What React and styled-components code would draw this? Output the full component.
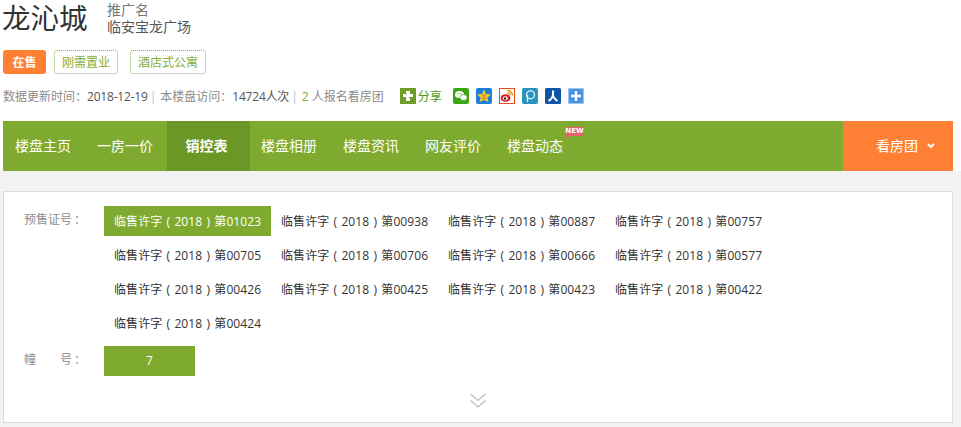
import React from "react";
import styled, { createGlobalStyle } from "styled-components";

const GlobalStyle = createGlobalStyle`
  html, body { margin: 0; padding: 0; background: #f2f2f2; }
  body { font-family: "Open Sans", "Noto Sans CJK SC", sans-serif; font-size: 12px; color: #333; }
`;
const Page = styled.div`width: 961px; height: 427px; overflow: hidden;`;
const Top = styled.header`background: #fff; height: 171px; padding-left: 3px; box-sizing: border-box; display: flex; flex-direction: column;`;
const TitleRow = styled.div`display: flex; height: 50px; align-items: flex-start;`;
const Title = styled.h1`margin: 0 0 0 -1px; width: 105px; font-size: 28.5px; font-weight: 400; line-height: 36px; color: #333;`;
const Promo = styled.div`font-size: 14px; line-height: 17px; padding-top: 1px; color: #777; white-space: nowrap;`;
const PromoName = styled.div`color: #555; line-height: 18px;`;
const Tags = styled.div`display: flex; height: 24px; align-items: stretch;`;
const Status = styled.span`width: 43px; background: #ff7f35; color: #fff; font-weight: 700; border-radius: 3px; display: flex; align-items: center; justify-content: center; margin-right: 8px;`;
const Tag = styled.span`border: 1px dotted #8fb648; border-radius: 3px; color: #86ae35; padding: 0 7px; display: flex; align-items: center; margin-right: 12px; white-space: nowrap;`;
const Info = styled.div`height: 20px; margin-top: 12px; display: flex; align-items: center; color: #8c8c8c; white-space: pre;`;
const Val = styled.span`color: #555; letter-spacing: -0.2px;`;
const Pipe = styled.span`color: #a8c4e0; margin: 0 4px 0 2px;`;
const Green = styled.span`color: #7eab2f;`;
const ShareBox = styled.span`display: flex; align-items: center; margin-left: 16px; color: #4f9a18; margin-right: 11px; gap: 2px;`;
const IconRow = styled.span`display: flex; gap: 7px;`;
const Nav = styled.nav`margin-top: 15px; width: 950px; height: 50px; background: #7eab2f; display: flex; align-items: stretch; color: #fff;`;
const Tab = styled.a`
  position: relative; display: flex; align-items: center; white-space: nowrap; font-size: 14px;
  padding: 0 13px 2px;
  ${p => p.$active ? "background:#6b9727;font-weight:700;margin:0 -2px 0 1px;padding:0 22.5px 2px 18.5px;" : ""}
  ${p => p.$first ? "padding-left:12px;" : ""}
`;
const Badge = styled.span`
  position: absolute; left: 71px; top: 6px; background: #e9626b; color: #fff; font: 700 7px/9px "DejaVu Sans", sans-serif;
  width: 19px; height: 9px; text-align: center;
  &::after { content: ""; position: absolute; left: 1px; top: 9px; border-left: 3px solid #e9626b; border-bottom: 3px solid transparent; }
`;
const Team = styled.a`margin-left: auto; width: 110px; background: #ff7f35; box-sizing: border-box; padding: 0 0 2px 33px; display: flex; align-items: center; font-size: 14px; gap: 9px;`;
const Main = styled.main`padding: 20px 8px 0 3px;`;
const Panel = styled.section`height: 232px; box-sizing: border-box; border: 1px solid #ddd; background: #fff; padding: 14px 0 0 20px; position: relative;`;
const Row = styled.div`display: flex; align-items: flex-start;`;
const Label = styled.div`width: 80px; height: 30px; line-height: 28px; color: #8c8c8c; white-space: pre;`;
const Colon = styled.span`margin-left: 2px;`;
const List = styled.div`display: flex; flex-wrap: wrap; width: 670px; margin-bottom: 4px;`;
const Item = styled.a`
  width: 167px; height: 30px; margin-bottom: 4px; box-sizing: border-box; padding-left: 10px; line-height: 32px; white-space: nowrap;
  letter-spacing: 0.1px; color: ${p => p.$on ? "#fff" : "#333"}; background: ${p => p.$on ? "#7eab2f" : "transparent"};
`;
const Paren = styled.span`display: inline-block; width: 12px; text-align: center;`;
const Build = styled.a`width: 91px; height: 30px; background: #7eab2f; color: #fff; line-height: 30px; text-align: center;`;
const More = styled.div`display: flex; justify-content: center; margin-top: 17px; margin-left: -21px;`;
const ChevronBox = styled.span`display: block; margin-top: 2px;`;

const s = { display: "block" };
const Share = () => (<svg width="16" height="16" style={s}><rect width="16" height="16" fill="#6f9e28"/><path d="M6 3h4v3h3v3h-3v4H6V9H3V6h3z" fill="#fff"/><path d="M6 6h1v1H6zM9 9h1v1H9z" fill="#6f9e28"/></svg>);
const Wechat = () => (<svg width="16" height="16" style={s}><rect width="16" height="16" rx="2" fill="#3ca512"/><ellipse cx="6.5" cy="6.5" rx="4.5" ry="3.6" fill="#fff"/><ellipse cx="10.6" cy="9.6" rx="3.6" ry="3" fill="#fff" stroke="#3ca512" strokeWidth=".7"/><circle cx="5" cy="5.6" r=".7" fill="#3ca512"/><circle cx="8" cy="5.6" r=".7" fill="#3ca512"/></svg>);
const Qzone = () => (<svg width="16" height="16" style={s}><rect width="16" height="16" rx="2" fill="#1b7fd6"/><path d="M8 1.500l2 4.500 5 .6-3.600 3 1 4.400L8 12l-4.400 2 1-4.400-3.600-3 5-.6z" fill="#fbc92f"/><path d="M6 6.500h4v1L7.500 10H10v1H6v-1l2.500-2.500H6z" fill="#c9821a"/></svg>);
const Weibo = () => (<svg width="16" height="16" style={s}><rect x=".5" y=".5" width="15" height="15" fill="#fff" stroke="#e4501e"/><ellipse cx="6.500" cy="10" rx="5" ry="3.800" fill="#d9232c"/><ellipse cx="6.200" cy="10.300" rx="2.500" ry="2" fill="#fff"/><circle cx="6" cy="10.400" r="1.200" fill="#222"/><path d="M8.500 2.500a5 5 0 0 1 5 5M8.500 5a2.500 2.500 0 0 1 2.500 2.500" fill="none" stroke="#f29100" strokeWidth="1.300"/></svg>);
const Tencent = () => (<svg width="16" height="16" style={s}><rect width="16" height="16" rx="2" fill="#2a93bd"/><circle cx="8.500" cy="6.800" r="4" fill="none" stroke="#e4f5fb" strokeWidth="1.300"/><path d="M5.500 14V7" stroke="#e4f5fb" strokeWidth="1.300"/></svg>);
const Baidu = () => (<svg width="16" height="16" style={s}><rect width="16" height="16" rx="1.500" fill="#0d56a6"/><path d="M8 2.500v3.500c0 3-2 5.500-4.500 7M8 6c0 3 2 5.500 4.500 7" fill="none" stroke="#fff" strokeWidth="2"/></svg>);
const Plus = () => (<svg width="16" height="16" style={s}><rect width="16" height="16" rx="2" fill="#4c92e3"/><rect x=".5" y=".5" width="15" height="15" rx="1.500" fill="none" stroke="#9cc4f0"/><path d="M8 3v10M3 8h10" stroke="#fff" strokeWidth="2.400"/></svg>);
const Chevron = () => (<ChevronBox><svg width="8" height="6" style={s}><path d="M1 1l3 3 3-3" fill="none" stroke="#fff" strokeWidth="2"/></svg></ChevronBox>);
const Double = () => (<svg width="16" height="16" style={s}><path d="M.5 1L8 7.500 15.500 1M.5 7.500L8 14l7.500-6.500" fill="none" stroke="#bdbdbd" strokeWidth="1.300"/></svg>);

const permits = ["01023","00938","00887","00757","00705","00706","00666","00577","00426","00425","00423","00422","00424"];
const tabs = ["楼盘主页","一房一价","销控表","楼盘相册","楼盘资讯","网友评价","楼盘动态"];

export default function App() {
  return (
    <Page>
      <GlobalStyle />
      <Top>
        <TitleRow>
          <Title>龙沁城</Title>
          <Promo>推广名<PromoName>临安宝龙广场</PromoName></Promo>
        </TitleRow>
        <Tags>
          <Status>在售</Status>
          <Tag>刚需置业</Tag>
          <Tag>酒店式公寓</Tag>
        </Tags>
        <Info>
          数据更新时间：<Val>2018-12-19</Val><Pipe>|</Pipe>本楼盘访问：<Val>14724人次</Val><Pipe>|</Pipe><Green>2</Green> 人报名看房团
          <ShareBox><Share />分享</ShareBox>
          <IconRow><Wechat /><Qzone /><Weibo /><Tencent /><Baidu /><Plus /></IconRow>
        </Info>
        <Nav>
          {tabs.map((t, i) => (
            <Tab key={t} $active={i === 2} $first={i === 0}>
              {t}{i === 6 && <Badge>NEW</Badge>}
            </Tab>
          ))}
          <Team>看房团<Chevron /></Team>
        </Nav>
      </Top>
      <Main>
        <Panel>
          <Row>
            <Label>预售证号<Colon>：</Colon></Label>
            <List>
              {permits.map((n, i) => <Item key={n} $on={i === 0}>临售许字<Paren>(</Paren>2018<Paren>)</Paren>第{n}</Item>)}
            </List>
          </Row>
          <Row>
            <Label>幢{"\u3000\u3000"}号<Colon>：</Colon></Label>
            <Build>7</Build>
          </Row>
          <More><Double /></More>
        </Panel>
      </Main>
    </Page>
  );
}
